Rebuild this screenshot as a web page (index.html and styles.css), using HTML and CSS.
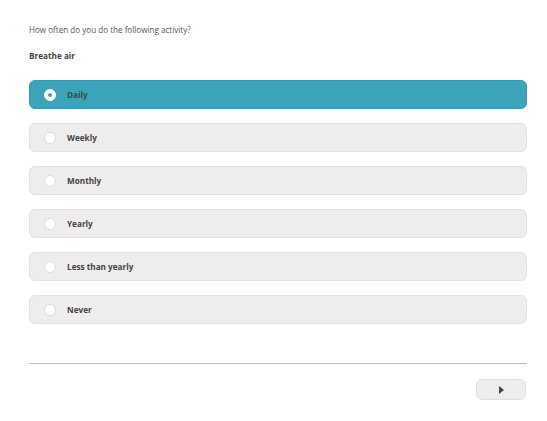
FILE: index.html
```html
<!DOCTYPE html>
<html>
<head>
<meta charset="utf-8">
<link rel="stylesheet" href="styles.css">
</head>
<body>
<div class="page">
  <p class="question">How often do you do the following activity?</p>
  <p class="item">Breathe air</p>
  <div class="options">
    <div class="option selected"><span class="radio"></span><span class="label">Daily</span></div>
    <div class="option"><span class="radio"></span><span class="label">Weekly</span></div>
    <div class="option"><span class="radio"></span><span class="label">Monthly</span></div>
    <div class="option"><span class="radio"></span><span class="label">Yearly</span></div>
    <div class="option"><span class="radio"></span><span class="label">Less than yearly</span></div>
    <div class="option"><span class="radio"></span><span class="label">Never</span></div>
  </div>
  <div class="footer">
    <button class="next"><span class="arrow"></span></button>
  </div>
</div>
</body>
</html>
```
FILE: styles.css
```css
html, body { margin: 0; padding: 0; background: #fff; }
body { font-family: "Open Sans", "DejaVu Sans", sans-serif; color: #444; }
.page { width: 498px; padding: 0 20px 0 29px; }
.question { margin: 0; padding-top: 24px; font-size: 8.1px; line-height: 12px; color: #555; }
.item { margin: 14px 0 0; font-size: 8.2px; line-height: 12px; font-weight: 700; color: #444; }
.options { display: flex; flex-direction: column; gap: 14px; margin-top: 18px; }
.option {
  box-sizing: border-box; height: 29px; border-radius: 6px;
  background: #eeeced; border: 1px solid #e3e2e3;
  display: flex; align-items: center; padding-left: 14px;
}
.option.selected { background: #3ba4b8; border-color: #3799ad; }
.radio {
  box-sizing: border-box; width: 12px; height: 12px; border-radius: 50%;
  background: #fff; border: 1px solid #dcdcdc; position: relative; flex: none;
}
.option.selected .radio { border-color: #fff; }
.option.selected .radio::after {
  content: ""; position: absolute; left: 3px; top: 3px; width: 4px; height: 4px;
  border-radius: 50%; background: #3ba4b8;
}
.label { margin-left: 11px; font-size: 8.2px; font-weight: 700; color: #444; }
.footer {
  margin-top: 39px; border-top: 1px solid #bbb; display: flex; justify-content: flex-end;
  padding-top: 15px;
}
.next {
  box-sizing: border-box; width: 50px; height: 21px; border-radius: 6px;
  background: #eeeced; border: 1px solid #e0dfe0; margin-right: 1px;
  display: flex; align-items: center; justify-content: center; padding: 0; padding-left: 1px;
}
.arrow {
  width: 0; height: 0; border-left: 5px solid #444; border-top: 4px solid transparent; border-bottom: 4px solid transparent;
}
```
